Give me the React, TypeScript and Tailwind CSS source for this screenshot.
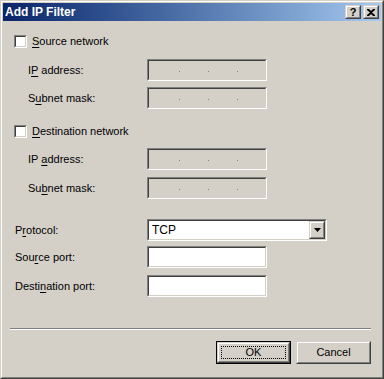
import React from "react";

function Sunken({
  className,
  inner,
  children,
}: {
  className: string;
  inner: string;
  children?: React.ReactNode;
}) {
  return (
    <div
      className={`border border-t-[#808080] border-l-[#808080] border-b-white border-r-white ${className}`}
    >
      <div
        className={`h-full w-full border border-t-[#404040] border-l-[#404040] border-b-[#d4d0c8] border-r-[#d4d0c8] ${inner}`}
      >
        {children}
      </div>
    </div>
  );
}

function Raised({
  className,
  inner,
  children,
}: {
  className: string;
  inner: string;
  children?: React.ReactNode;
}) {
  return (
    <div
      className={`border border-t-[#d4d0c8] border-l-[#d4d0c8] border-b-[#404040] border-r-[#404040] ${className}`}
    >
      <div
        className={`h-full w-full border border-t-white border-l-white border-b-[#808080] border-r-[#808080] bg-[#d4d0c8] ${inner}`}
      >
        {children}
      </div>
    </div>
  );
}

function CheckRow({ pre, u, post }: { pre: string; u: string; post: string }) {
  return (
    <div className="flex h-[13px] items-center pl-[4px]">
      <Sunken className="h-[13px] w-[13px] shrink-0" inner="bg-white" />
      <span className="ml-[5px] leading-[13px]">
        {pre}
        <span className="underline underline-offset-[2px]">{u}</span>
        {post}
      </span>
    </div>
  );
}

function IpRow({
  pre,
  u,
  post,
  mt,
}: {
  pre: string;
  u: string;
  post: string;
  mt: string;
}) {
  return (
    <div className={`flex h-[22px] items-center pl-[4px] ${mt}`}>
      <div className="w-[133px] shrink-0 pl-[14px]">
        {pre}
        <span className="underline underline-offset-[2px]">{u}</span>
        {post}
      </div>
      <Sunken className="h-[22px] w-[120px]" inner="bg-[#d4d0c8]">
        <div className="flex pl-[30px] pt-[10px]">
          <div className="h-[1px] w-[1px] bg-[#808080]" />
          <div className="ml-[28px] h-[1px] w-[1px] bg-[#808080]" />
          <div className="ml-[28px] h-[1px] w-[1px] bg-[#808080]" />
        </div>
      </Sunken>
    </div>
  );
}

function PortRow({
  pre,
  u,
  post,
  mt,
}: {
  pre: string;
  u: string;
  post: string;
  mt: string;
}) {
  return (
    <div className={`flex h-[22px] items-center pl-[4px] ${mt}`}>
      <div className="w-[133px] shrink-0 pl-[1px]">
        {pre}
        <span className="underline underline-offset-[2px]">{u}</span>
        {post}
      </div>
      <Sunken className="h-[22px] w-[120px]" inner="bg-white" />
    </div>
  );
}

export default function App() {
  return (
    <div className="h-[379px] w-[384px] font-['Liberation_Sans',Arial,sans-serif] text-[11px] text-black">
      <div className="h-full w-full border border-t-[#d4d0c8] border-l-[#d4d0c8] border-b-[#404040] border-r-[#404040]">
        <div className="flex h-full w-full flex-col border border-t-white border-l-white border-b-[#808080] border-r-[#808080] bg-[#d4d0c8] p-[1px]">
          {/* title bar */}
          <div className="flex h-[18px] items-center bg-linear-to-r from-[#0a246a] to-[#a6caf0] pl-[2px] pr-[2px]">
            <span className="flex-1 text-[12px] font-bold text-white">
              Add IP Filter
            </span>
            <Raised className="h-[14px] w-[16px]" inner="flex items-center justify-center">
              <span className="text-[11px] font-bold leading-none">?</span>
            </Raised>
            <Raised className="ml-[2px] h-[14px] w-[16px]" inner="flex items-center justify-center">
              <svg width="8" height="7" viewBox="0 0 8 7">
                <path
                  d="M0 0h2l2 2 2-2h2v1L5 3.5 8 6v1H6L4 5 2 7H0V6l3-2.5L0 1z"
                  fill="black"
                />
              </svg>
            </Raised>
          </div>

          {/* content */}
          <div className="flex flex-1 flex-col pl-[7px] pr-[10px]">
            <div className="mt-[14px]">
              <CheckRow pre="" u="S" post="ource network" />
            </div>
            <IpRow pre="I" u="P" post=" address:" mt="mt-[11px]" />
            <IpRow pre="S" u="u" post="bnet mask:" mt="mt-[6px]" />
            <div className="mt-[16px]">
              <CheckRow pre="" u="D" post="estination network" />
            </div>
            <IpRow pre="IP " u="a" post="ddress:" mt="mt-[10px]" />
            <IpRow pre="Su" u="b" post="net mask:" mt="mt-[7px]" />

            <div className="mt-[20px] flex h-[22px] items-center pl-[4px]">
              <div className="w-[133px] shrink-0 pl-[1px]">
                P<span className="underline underline-offset-[2px]">r</span>
                otocol:
              </div>
              <Sunken className="h-[22px] w-[180px]" inner="bg-white flex items-center">
                <span className="flex-1 pl-[3px] text-[12px]">TCP</span>
                <Raised className="h-full w-[16px]" inner="flex items-center justify-center">
                  <svg width="7" height="4" viewBox="0 0 7 4">
                    <path d="M0 0h7L3.5 4z" fill="black" />
                  </svg>
                </Raised>
              </Sunken>
            </div>
            <PortRow pre="Sou" u="r" post="ce port:" mt="mt-[5px]" />
            <PortRow pre="Desti" u="n" post="ation port:" mt="mt-[7px]" />

            <div className="mt-[31px] h-[2px] border-t border-t-[#808080] border-b border-b-white" />

            <div className="mt-[11px] flex justify-end gap-[5px]">
              <div className="h-[23px] w-[75px] border border-black">
                <Raised className="h-full w-full" inner="p-[2px]">
                  <div className="flex h-full w-full items-center justify-center border border-dotted border-black">
                    OK
                  </div>
                </Raised>
              </div>
              <Raised className="h-[23px] w-[75px]" inner="flex items-center justify-center">
                Cancel
              </Raised>
            </div>
          </div>
        </div>
      </div>
    </div>
  );
}
